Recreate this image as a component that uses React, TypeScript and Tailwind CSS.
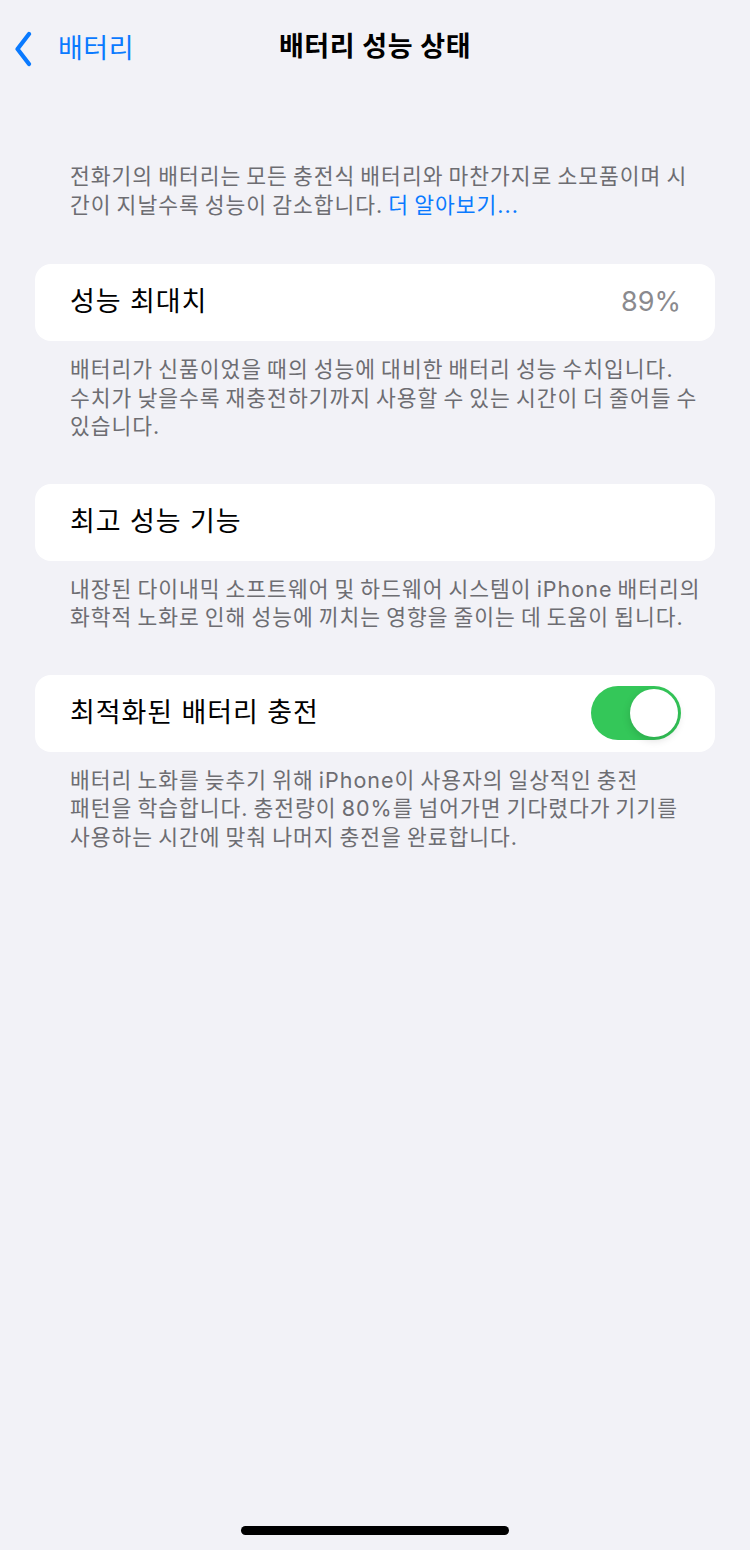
const font = { fontFamily: 'Inter, "Noto Sans CJK KR", "Noto Sans", sans-serif' }

const Footer = ({ lines }: { lines: string[] }) => (
  <div className="px-[35px] pt-[14px] pb-[43px] text-[21.5px] leading-[28.5px] tracking-[1px] [word-spacing:-2px] text-[#6d6d72]">
    {lines.map(line => (
      <div key={line} className="whitespace-nowrap">
        {line}
      </div>
    ))}
  </div>
)

const Toggle = ({ on }: { on: boolean }) => (
  <div
    className={`flex h-[54px] w-[90px] items-center rounded-full p-[3px] ${
      on ? 'justify-end bg-[#34c759]' : 'justify-start bg-[#e9e9eb]'
    }`}
  >
    <div className="h-[48px] w-[48px] rounded-full bg-white shadow-[0_3px_8px_rgba(0,0,0,0.15)]" />
  </div>
)

const Row = ({ children }: { children: React.ReactNode }) => (
  <div className="flex h-[77px] items-center justify-between rounded-[16px] bg-white pl-[35px] pr-[34px] text-[27px] tracking-[0.9px] text-black">
    {children}
  </div>
)

const BackChevron = () => (
  <svg width="17" height="36" viewBox="0 0 17 36" fill="none">
    <polyline
      points="14,3 2.5,18 14,33"
      stroke="#0a7aff"
      strokeWidth="4.2"
      strokeLinecap="round"
      strokeLinejoin="round"
    />
  </svg>
)

const App = () => {
  return (
    <div className="flex min-h-[1550px] flex-col bg-[#f2f2f7]" style={font}>
      <div className="relative flex h-[94px] items-center justify-center">
        <div className="absolute left-[15px] top-[29px] flex items-center text-[#0a7aff]">
          <BackChevron />
          <span className="ml-[26px] text-[27px] tracking-[0.5px]">배터리</span>
        </div>
        <span className="text-[27px] font-semibold tracking-[0.5px] text-black">배터리 성능 상태</span>
      </div>

      <div className="px-[70px] pt-[68px] pb-[44px] text-[21.5px] leading-[29px] tracking-[1px] [word-spacing:-2px] text-[#6d6d72]">
        <div className="whitespace-nowrap">전화기의 배터리는 모든 충전식 배터리와 마찬가지로 소모품이며 시</div>
        <div className="whitespace-nowrap">
          간이 지날수록 성능이 감소합니다. <span className="text-[#0a7aff]">더 알아보기...</span>
        </div>
      </div>

      <div className="px-[35px]">
        <Row>
          <span>성능 최대치</span>
          <span className="tracking-normal text-[#8a8a8e]">89%</span>
        </Row>
        <Footer
          lines={[
            '배터리가 신품이었을 때의 성능에 대비한 배터리 성능 수치입니다.',
            '수치가 낮을수록 재충전하기까지 사용할 수 있는 시간이 더 줄어들 수',
            '있습니다.',
          ]}
        />

        <Row>
          <span>최고 성능 기능</span>
        </Row>
        <Footer
          lines={[
            '내장된 다이내믹 소프트웨어 및 하드웨어 시스템이 iPhone 배터리의',
            '화학적 노화로 인해 성능에 끼치는 영향을 줄이는 데 도움이 됩니다.',
          ]}
        />

        <Row>
          <span>최적화된 배터리 충전</span>
          <Toggle on />
        </Row>
        <Footer
          lines={[
            '배터리 노화를 늦추기 위해 iPhone이 사용자의 일상적인 충전',
            '패턴을 학습합니다. 충전량이 80%를 넘어가면 기다렸다가 기기를',
            '사용하는 시간에 맞춰 나머지 충전을 완료합니다.',
          ]}
        />
      </div>

      <div className="flex-1" />
      <div className="flex justify-center pb-[15px]">
        <div className="h-[9px] w-[268px] rounded-full bg-black" />
      </div>
    </div>
  )
}

export default App
